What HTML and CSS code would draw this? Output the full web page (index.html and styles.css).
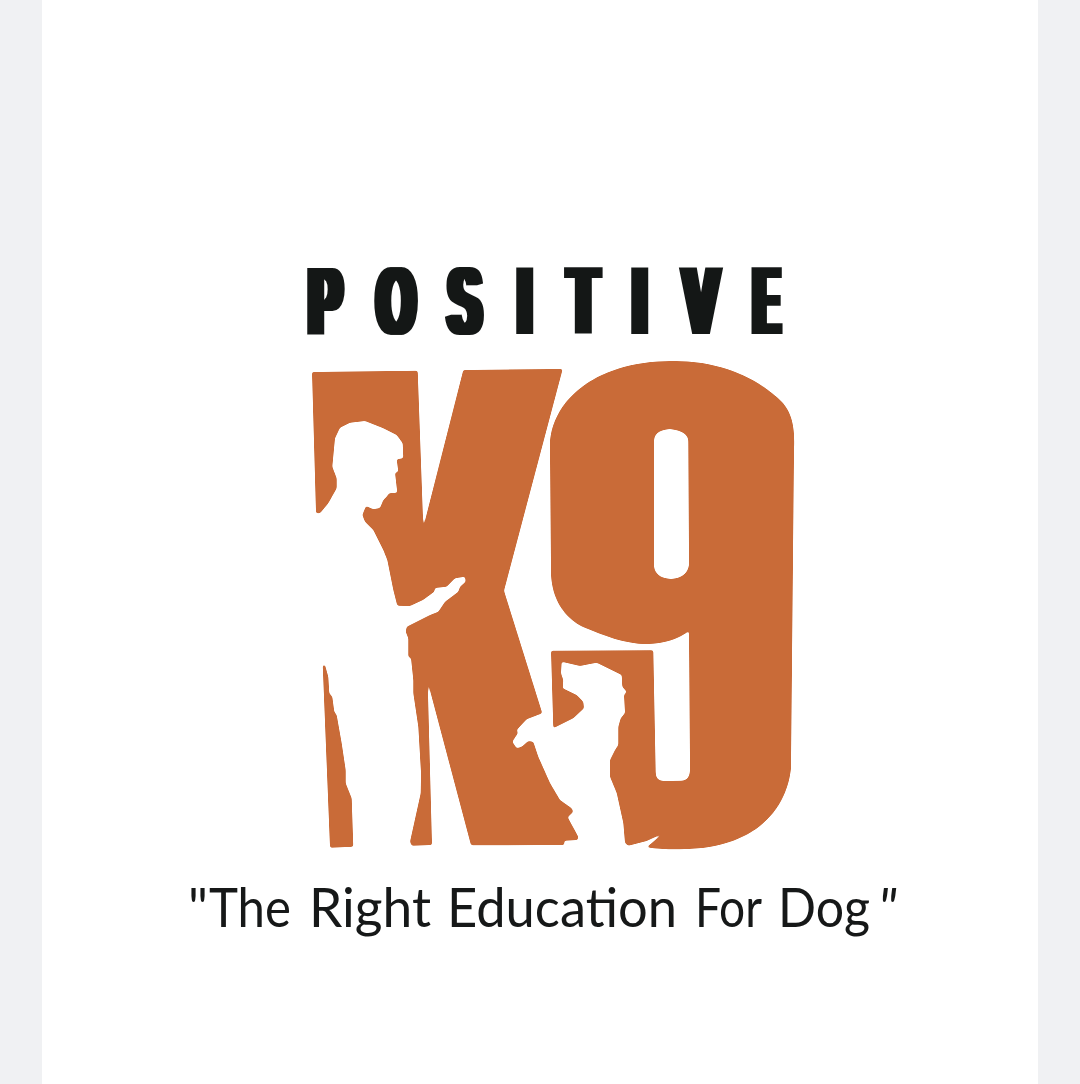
FILE: index.html
```html
<!DOCTYPE html>
<html lang="en">
<head>
<meta charset="utf-8">
<title>Positive K9</title>
<link rel="stylesheet" href="styles.css">
</head>
<body>
<main class="page">
<svg class="logo" viewBox="42 0 996 1084" role="img" aria-label="Positive K9 logo">
  <defs>
    <filter id="widen" x="-5%" y="-10%" width="110%" height="120%" color-interpolation-filters="sRGB">
      <feMorphology operator="dilate" radius="4.5 0"/>
    </filter>
    <filter id="soften" x="-5%" y="-5%" width="110%" height="110%" color-interpolation-filters="sRGB">
      <feGaussianBlur in="SourceAlpha" stdDeviation="0.9"/>
      <feComponentTransfer result="edge">
        <feFuncA type="linear" slope="4" intercept="-1.5"/>
      </feComponentTransfer>
      <feFlood flood-color="#c96b38"/>
      <feComposite in2="edge" operator="in"/>
    </filter>
  </defs>
  <g class="wordmark" filter="url(#widen)">
    <g transform="translate(0 334) scale(0.5 1)">
      <text class="wordmark-text"><tspan x="618">P</tspan><tspan x="754.6">O</tspan><tspan x="897.2">S</tspan><tspan x="1036.2">I</tspan><tspan x="1137">T</tspan><tspan x="1266.2">I</tspan><tspan x="1367" textLength="70" lengthAdjust="spacingAndGlyphs">V</tspan><tspan x="1508" textLength="50" lengthAdjust="spacingAndGlyphs">E</tspan></text>
    </g>
  </g>
  <g class="mark" filter="url(#soften)">
    <path d="M312 372 L417.7 370.7 L423.3 527.3 L463.3 370 L562.7 369 L504 590.7 L542.3 713.3 L526.7 719.3 L516.7 730 L518 733 L512.3 741.7 L516.7 748.3 L521.7 746.7 L528.3 741 L533.3 741.7 L538.3 756.7 L550 783 L560 800 L571.7 808.3 L573.3 811.7 L567.7 817.3 L578.3 836.7 L577.7 840 L564.3 840.7 L564.3 845 L471 845.3 L427.7 681.7 L432 845 L411.7 845.7 L410 841.7 L420.7 793.3 L421 773 L418.3 726.7 L413.3 693.3 L413.3 680 L411 658.3 L408.3 656.7 L408.3 638.3 L405.7 631.7 L406.7 626.7 L430 615 L438.3 611.7 L445 601.7 L458.3 591.7 L460 586.7 L465.7 581.7 L465 576.7 L455 578.3 L446.7 586.7 L435 588 L434.3 591.7 L423 600 L410 606 L397.3 605.7 L393.3 590 L387.3 560 L383.3 550 L373.3 530 L365 521.7 L362.3 515 L366 506 L373.3 509.3 L380 508 L383.3 500 L386.7 496.7 L389 493.3 L397.3 492.7 L395 472.7 L398.3 471.7 L396.7 459.3 L403.3 458.3 L402.7 443.3 L396.7 435 L383.3 428.3 L365 421 L350 422.7 L340 427.7 L335 438.3 L332.3 466.7 L336.7 478.3 L336.7 488.3 L328.3 503.3 L320 513.3 L316 513.3 Z"/>
    <path d="M322.7 665 L325 665 L328.3 676.7 L329.3 693.3 L332.3 696.7 L334.3 711.7 L336.7 715 L341.7 743.3 L345.7 770 L345.7 783.3 L351.7 798.3 L353.3 846.7 L330 847.7 Z"/>
    <path fill-rule="evenodd" d="M551 650.7 L653.3 650.3 L655.7 773 Q656 781 664 781 L682 780.7 Q690 780 690 770 L689 631 C680 638 665 644 646 644 C625 644 605 636 583 627 C565 618 552 600 551 574 L550 446 C550 405 590 361 673 361 C725 361 760 380 783 403 C793 415 795 430 794 450 L791 768 C788 800 765 849 680 849.3 Q660 849.5 646.7 847.3 L663.3 833.3 L646.7 841 L628.3 845.7 L625 843 L623.3 823 L620 808 L616.7 793 L610 776.7 L610 760 L615 750 L618.3 745 L618.3 726.7 L620.7 718.3 L625 713 L624 695 L626.7 691.7 L622.3 686.7 L621.7 675 L596.7 662.7 L590 664 L580 666 L561.7 661.7 L561 673.3 L563.3 680 L562.7 688.3 L576.7 695 L583.3 701.7 L584 708.3 L573.3 718.3 L553.3 728.3 Z M654 441 Q654 430 670 429 Q688 431 688.3 441 L689 565 Q687 578 671 579 Q655 578 654 566 Z"/>
  </g>
  <text class="tagline" y="927"><tspan x="188">"</tspan><tspan x="209" textLength="82" lengthAdjust="spacingAndGlyphs">The</tspan><tspan x="309" textLength="122" lengthAdjust="spacingAndGlyphs">Right</tspan><tspan x="447" textLength="230" lengthAdjust="spacingAndGlyphs">Education</tspan><tspan x="695" textLength="67" lengthAdjust="spacingAndGlyphs">For</tspan><tspan x="778" textLength="92" lengthAdjust="spacingAndGlyphs">Dog</tspan><tspan class="tagline-close" x="878">"</tspan></text>
</svg>
</main>
</body>
</html>
```
FILE: styles.css
```css
html, body {
  margin: 0;
  padding: 0;
  height: 100%;
  overflow: hidden;
  background: #f0f1f3;
}

.page {
  width: 996px;
  height: 1084px;
  margin: 0 auto;
  background: #ffffff;
}

.logo {
  display: block;
  width: 996px;
  height: 1084px;
}

.wordmark-text {
  font-family: "Liberation Sans", sans-serif;
  font-weight: 700;
  font-size: 97px;
  fill: #141716;
}

.mark path {
  fill: #c96b38;
}

.tagline {
  font-family: "Lato", sans-serif;
  font-weight: 400;
  font-size: 54px;
  fill: #161818;
}

.tagline-close {
  font-style: italic;
}
```
